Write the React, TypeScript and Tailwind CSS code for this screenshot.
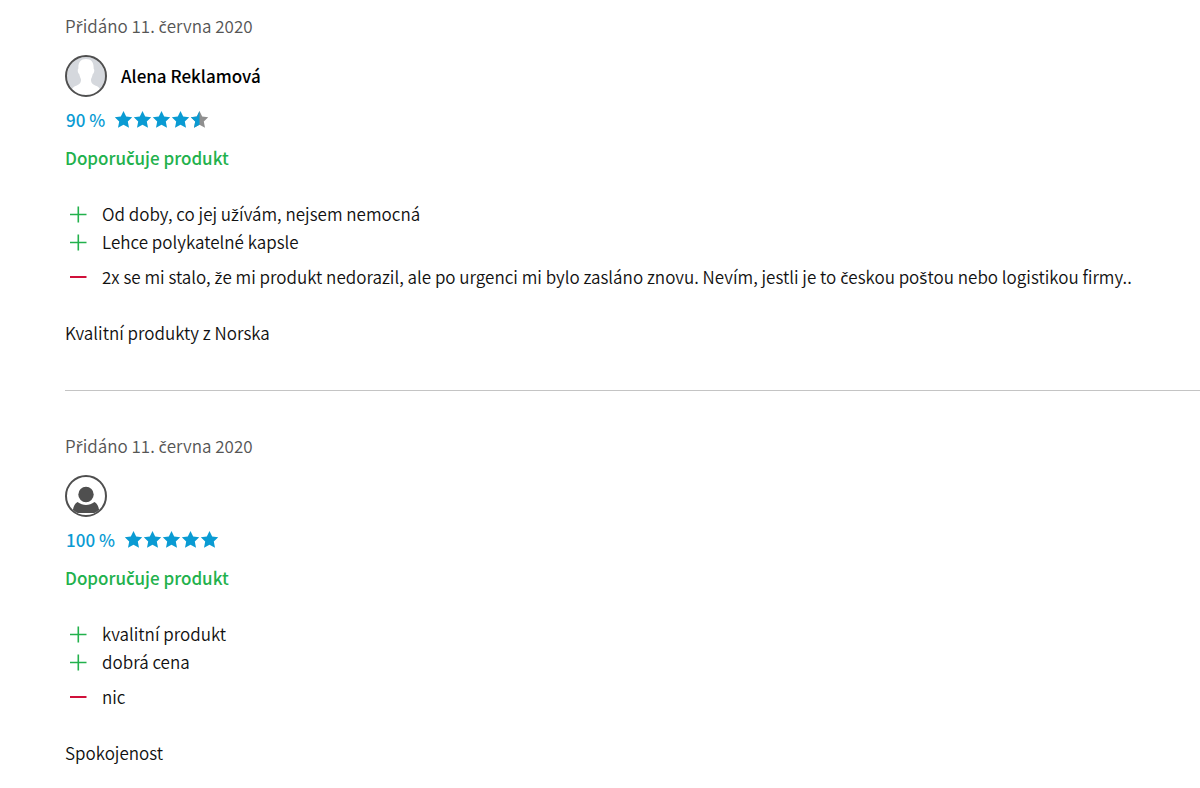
import clsx from 'clsx';

type Review = {
  id: number;
  date: string;
  name?: string;
  rating: number;
  pros: string[];
  cons: string[];
  text: string;
};

const reviews: Review[] = [
  {
    id: 1,
    date: '11. června 2020',
    name: 'Alena Reklamová',
    rating: 90,
    pros: ['Od doby, co jej užívám, nejsem nemocná', 'Lehce polykatelné kapsle'],
    cons: [
      '2x se mi stalo, že mi produkt nedorazil, ale po urgenci mi bylo zasláno znovu. Nevím, jestli je to českou poštou nebo logistikou firmy..',
    ],
    text: 'Kvalitní produkty z Norska',
  },
  {
    id: 2,
    date: '11. června 2020',
    rating: 100,
    pros: ['kvalitní produkt', 'dobrá cena'],
    cons: ['nic'],
    text: 'Spokojenost',
  },
];

const STAR = 'M9.5 0L12.2 5.600L18.200 6.300L13.800 10.500L15 16.800L9.500 13.700L4 16.800L5.200 10.500L0.800 6.300L6.800 5.600Z';

// The base font has no letters with a caron, they are taken from Noto Sans
function Czech({ children, strong }: { children: string; strong?: boolean }) {
  return (
    <>
      {children.split(/([čřžšě])/).map((part, i) =>
        i % 2 ? (
          <span
            key={i}
            className={clsx("font-['Noto_Sans',sans-serif] leading-none", strong ? 'font-semibold' : 'font-normal')}
          >
            {part}
          </span>
        ) : (
          part
        ),
      )}
    </>
  );
}

function Stars({ rating }: { rating: number }) {
  return (
    <svg className="h-[18px] w-[95px]" viewBox="0 0 95 18" aria-hidden="true">
      {[0, 1, 2, 3, 4].map((i) => {
        const fill = Math.min(1, Math.max(0, rating / 20 - i));
        return (
          <g key={i} transform={`translate(${i * 19} 0)`}>
            <clipPath id={`star-${rating}-${i}`}>
              <rect width={19 * fill} height="18" />
            </clipPath>
            {fill < 1 && <path d={STAR} fill="#8f8f8f" />}
            <path d={STAR} fill="#0a9bd3" clipPath={`url(#star-${rating}-${i})`} />
          </g>
        );
      })}
    </svg>
  );
}

// Customer with a profile gets the photo placeholder, anonymous one the plain icon
function Avatar({ named }: { named: boolean }) {
  return (
    <svg className="size-[42px] shrink-0" viewBox="0 0 42 42" aria-hidden="true">
      <clipPath id={named ? 'photo' : 'anonym'}>
        <circle cx="21" cy="21" r="19" />
      </clipPath>
      {named ? (
        <g clipPath="url(#photo)">
          <rect width="42" height="42" fill="#d5d8dd" />
          <path
            fill="#fff"
            d="M21 4C26.500 4 29 8 28.600 13.500C29.800 14.500 29.300 18 27.800 19C27.200 21.500 26.500 23 26 24.500C26 28 27.500 29.500 31.500 31C35 32.500 36 35 37 42H5C6 35 7 32.500 10.500 31C14.500 29.500 16 28 16 24.500C15.500 23 14.800 21.500 14.200 19C12.700 18 12.200 14.500 13.400 13.500C13 8 15.500 4 21 4Z"
          />
        </g>
      ) : (
        <g clipPath="url(#anonym)" fill="#4f4f4f">
          <circle cx="21" cy="19.500" r="7.700" />
          <path d="M7.500 38C8 32 9.500 28.500 12.500 27C18 31 24 31 29.500 27C32.500 28.500 34 32 34.500 38Z" />
        </g>
      )}
      <circle cx="21" cy="21" r="20" fill="none" stroke="#4f4f4f" strokeWidth="2" />
    </svg>
  );
}

function Points({ items, positive }: { items: string[]; positive?: boolean }) {
  return (
    <ul>
      {items.map((item) => (
        <li key={item} className="flex gap-[15px]">
          <svg
            className={clsx('ml-1 h-7 w-[18px] shrink-0', positive ? 'text-[#22b14c]' : 'text-[#d0103a]')}
            viewBox="0 0 18 28"
            stroke="currentColor"
            strokeWidth={positive ? 1.6 : 2}
            aria-hidden="true"
          >
            <path d={positive ? 'M1 14.500H17.500M9.300 6.500V22.500' : 'M1 14H17.500'} />
          </svg>
          <span>
            <Czech>{item}</Czech>
          </span>
        </li>
      ))}
    </ul>
  );
}

function ReviewItem({ review }: { review: Review }) {
  return (
    <article className="border-b border-[#c4c4c4] pt-[41px] pb-[43px] first:pt-3 last:border-b-0 last:pb-5">
      <p className="text-[#555]">
        <Czech>{`Přidáno ${review.date}`}</Czech>
      </p>
      <div className="mt-[15px] flex items-center gap-[14px]">
        <Avatar named={Boolean(review.name)} />
        {review.name && <h3 className="font-medium text-black">{review.name}</h3>}
      </div>
      <div className="mt-[9px] ml-px flex items-center gap-[9px] text-[#0a9bd3]">
        <span className="font-medium">{review.rating} %</span>
        <Stars rating={review.rating} />
      </div>
      <p className="mt-[10px] font-medium text-[#22b14c]">
        <Czech strong>Doporučuje produkt</Czech>
      </p>
      <div className="mt-7 flex flex-col gap-[7px]">
        <Points items={review.pros} positive />
        <Points items={review.cons} />
      </div>
      <p className="mt-7">
        <Czech>{review.text}</Czech>
      </p>
    </article>
  );
}

export default function App() {
  return (
    <main className="min-h-screen bg-white pl-[65px] font-['Noto_Sans_CJK_SC','Noto_Sans',sans-serif] text-[17px] leading-7 font-[350] text-[#111]">
      {reviews.map((review) => (
        <ReviewItem key={review.id} review={review} />
      ))}
    </main>
  );
}
